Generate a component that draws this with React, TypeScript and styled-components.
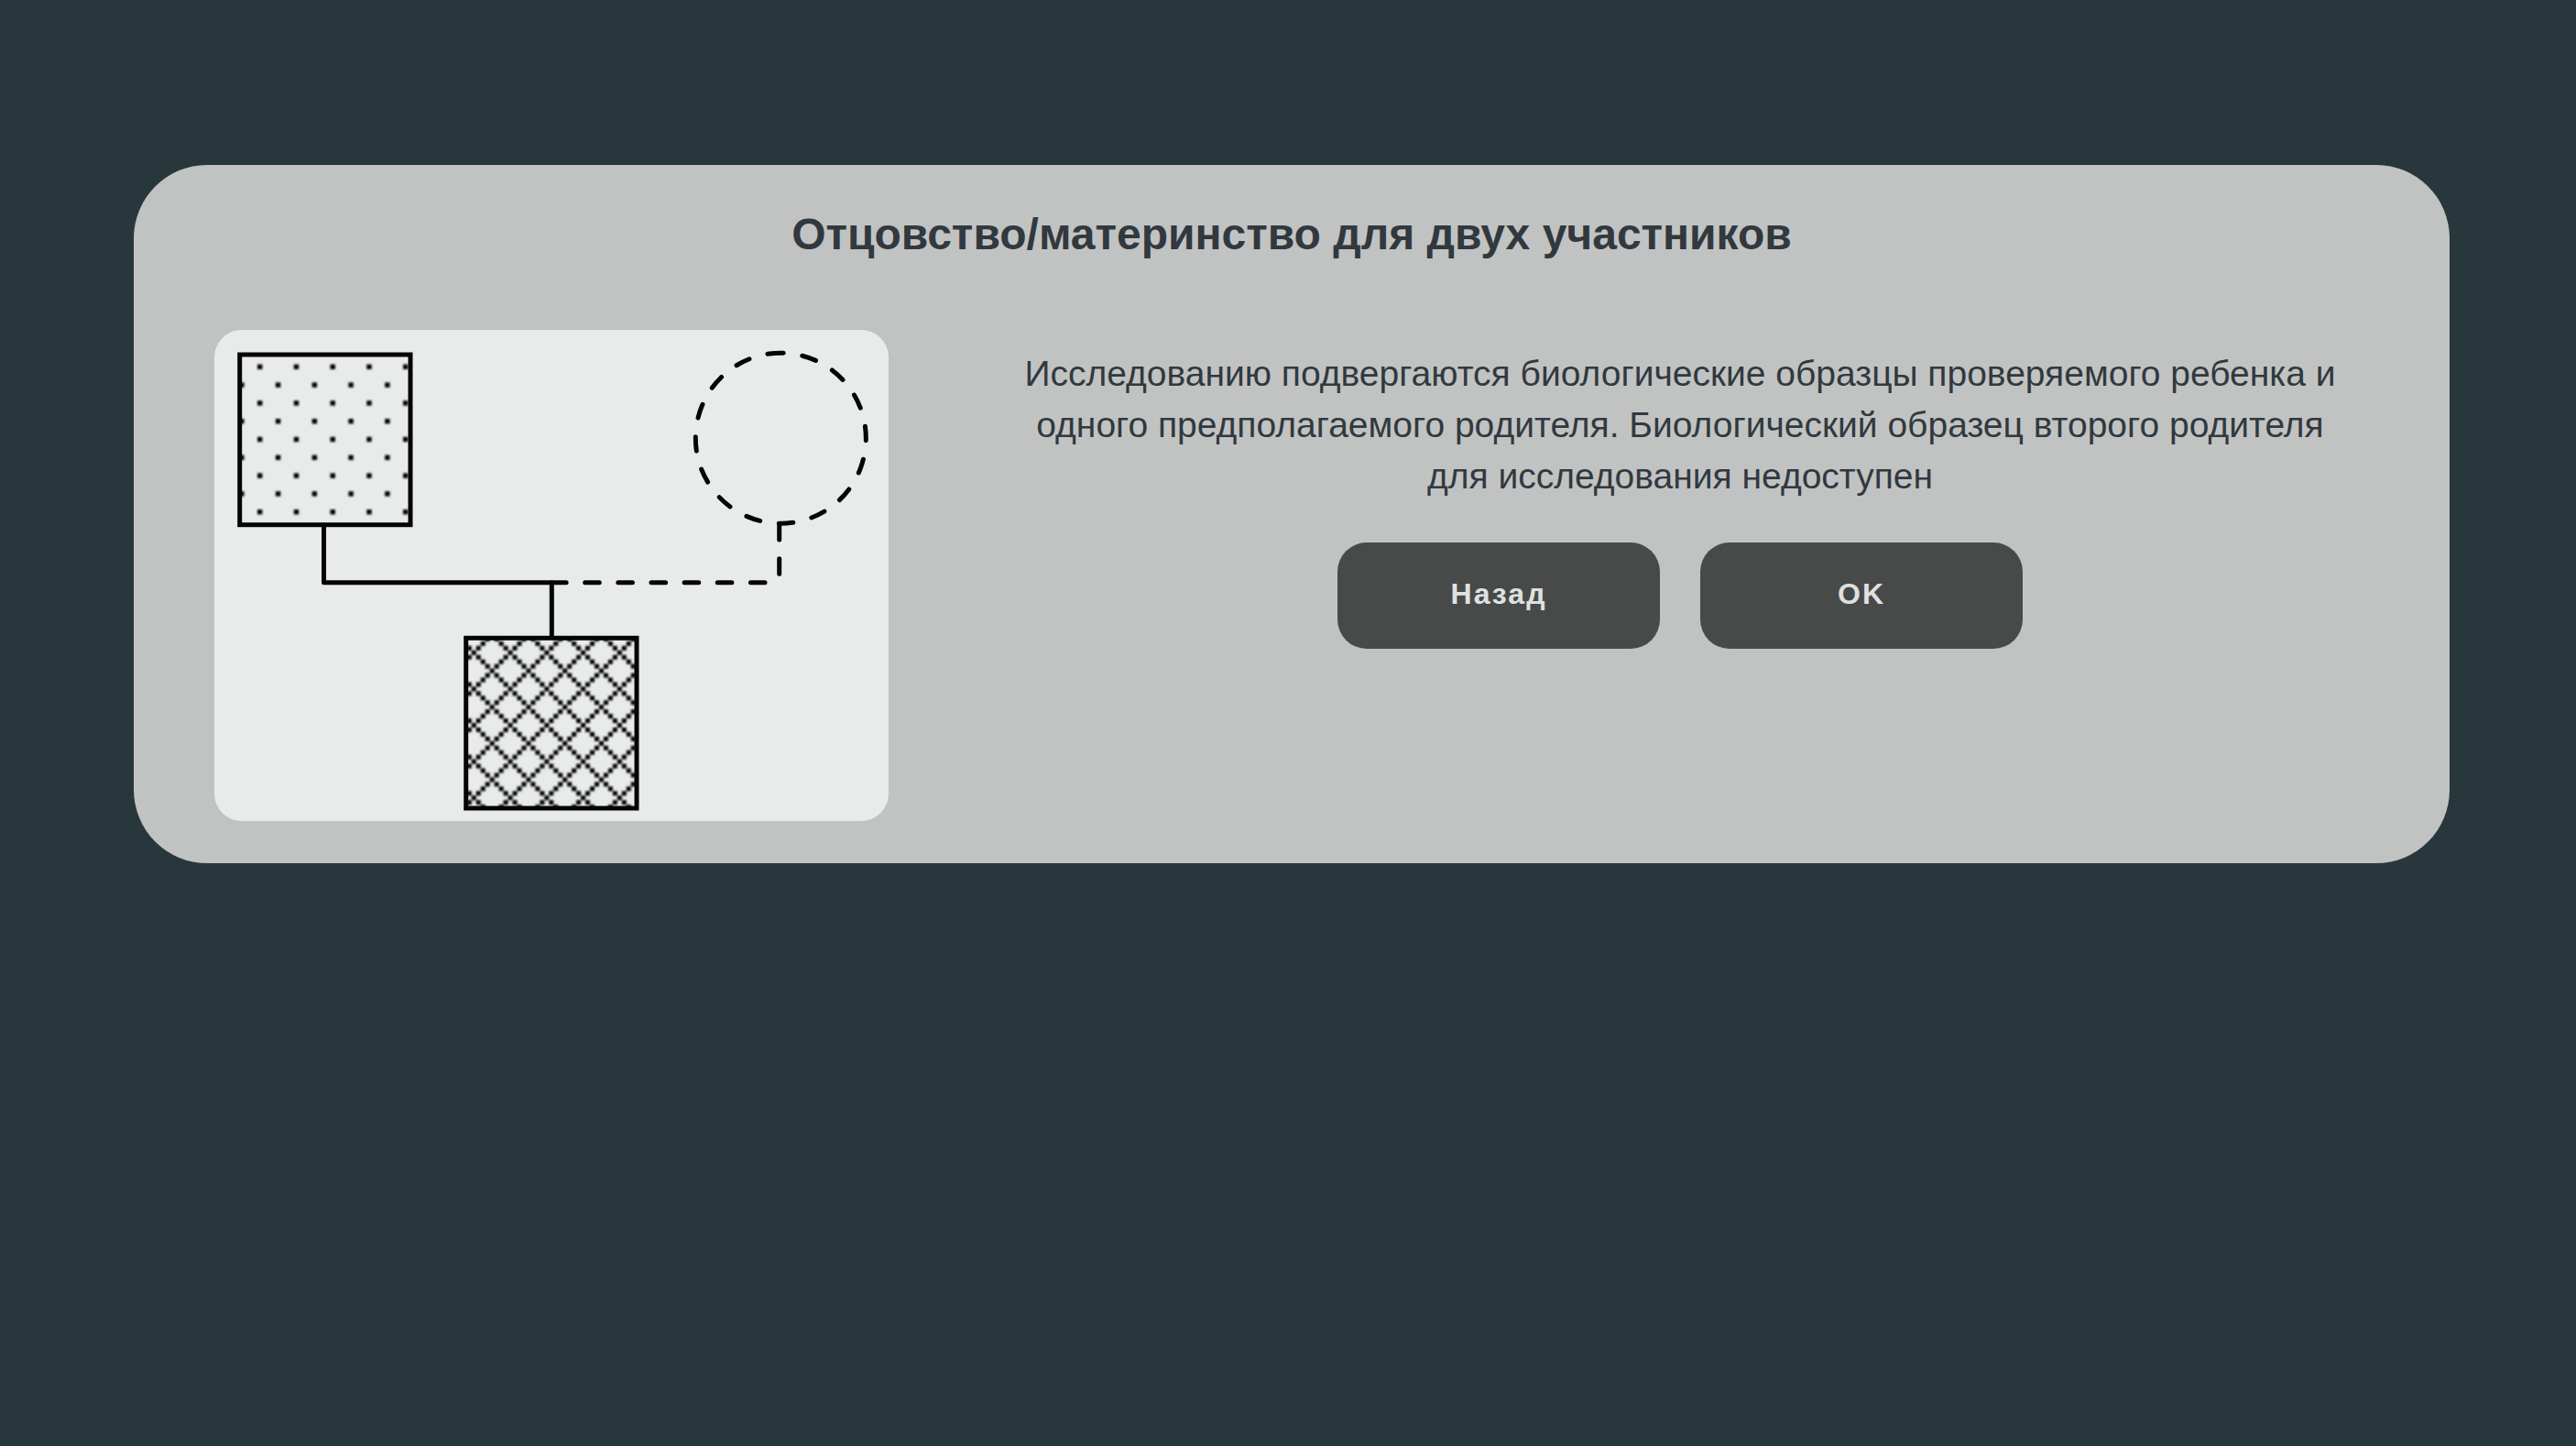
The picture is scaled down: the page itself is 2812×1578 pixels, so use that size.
import React from 'react';
import styled, { createGlobalStyle } from 'styled-components';

const GlobalStyle = createGlobalStyle`
  *, *::before, *::after { box-sizing: border-box; }
  body {
    margin: 0;
    background: #27373c;
    color: #31393f;
    font-family: "Liberation Sans", Arial, sans-serif;
  }
`;

const Page = styled.main`
  padding: 180px 138px 180px 146px;
`;

const Card = styled.section`
  padding: 46px 88px;
  border-radius: 80px;
  background: #c1c3c2;
`;

const Title = styled.h1`
  margin: 0 0 74px;
  font-size: 48px;
  line-height: 60px;
  text-align: center;
`;

const Columns = styled.div`
  display: grid;
  grid-template-columns: 736px 1fr;
  gap: 112px;
  align-items: start;
`;

const Diagram = styled.svg`
  display: block;
  width: 100%;
  height: auto;
  border-radius: 30px;
  background: #e8ebea;
`;

const Details = styled.div`
  padding: 20px 32px 0;
  text-align: center;
`;

const Description = styled.p`
  margin: 0 0 44px;
  font-size: 39px;
  line-height: 56px;
`;

const Actions = styled.div`
  display: flex;
  justify-content: center;
  gap: 44px;
`;

const Button = styled.button`
  width: 352px;
  height: 116px;
  padding: 0 0 4px;
  border: 0;
  border-radius: 32px;
  background: #484a49;
  color: #dfe1e0;
  font: bold 32px "Liberation Sans", Arial, sans-serif;
  letter-spacing: 2px;
`;

type Point = { x: number; y: number };

const STEP_X = 4.97;
const STEP_Y = 4.95;
const CELLS = 8;

// Sparse dots: two per repeat, the second half a repeat down and to the left.
const parentDots: Point[] = [];
for (let row = 0; row < 9; row += 1) {
  for (let col = 0; col < 5; col += 1) {
    parentDots.push({
      x: 49.7 + (col * CELLS - (row % 2) * 4) * STEP_X,
      y: 40.3 + row * 4 * STEP_Y,
    });
  }
}

// Crossing diagonals built of single cells.
const childCells: Point[] = [];
for (let row = -3; row <= 34; row += 1) {
  for (let col = -1; col <= 36; col += 1) {
    if ((row - col) % CELLS === 0 || (row + col) % CELLS === 0) {
      childCells.push({ x: 283.3 + col * STEP_X, y: 352.3 + row * STEP_Y });
    }
  }
}

function Dots({ points, size }: { points: Point[]; size: number }) {
  return (
    <>
      {points.map((p) => (
        <rect
          key={`${p.x}-${p.y}`}
          x={p.x - size / 2}
          y={p.y - size / 2}
          width={size}
          height={size}
        />
      ))}
    </>
  );
}

function FamilyDiagram() {
  return (
    <Diagram viewBox="0 0 736 536" role="img" aria-label="Схема родства">
      <defs>
        <filter id="soften">
          <feGaussianBlur stdDeviation="0.9" />
        </filter>
        <clipPath id="parent">
          <rect x="27.7" y="27" width="186.3" height="185.7" />
        </clipPath>
        <clipPath id="child">
          <rect x="274.7" y="336.3" width="186.3" height="185.7" />
        </clipPath>
      </defs>
      <g clipPath="url(#parent)" fill="#040605">
        <g filter="url(#soften)">
          <Dots points={parentDots} size={5.4} />
        </g>
      </g>
      <g clipPath="url(#child)" fill="#040605">
        <g filter="url(#soften)">
          <Dots points={childCells} size={5} />
        </g>
      </g>
      <g fill="none" stroke="#040605" strokeWidth="5">
        <rect x="27.7" y="27" width="186.3" height="185.7" />
        <rect x="274.7" y="336.3" width="186.3" height="185.7" />
        <path d="M119.5 213V275.7H368.3V338" strokeLinejoin="round" />
        <g strokeLinecap="round">
          <path d="M368.5 275.7H616.7" strokeDasharray="15.6 20.55" />
          <path d="M616.7 212.5V275" strokeDasharray="16.6 20.55" />
          <circle
            cx="618.3"
            cy="118.2"
            r="93"
            strokeDasharray="15.6 20.75"
            transform="rotate(-97.8 618.3 118.2)"
          />
        </g>
      </g>
    </Diagram>
  );
}

export default function App() {
  return (
    <>
      <GlobalStyle />
      <Page>
        <Card>
          <Title>Отцовство/материнство для двух участников</Title>
          <Columns>
            <FamilyDiagram />
            <Details>
              <Description>
                Исследованию подвергаются биологические образцы проверяемого ребенка и одного
                предполагаемого родителя. Биологический образец второго родителя для исследования
                недоступен
              </Description>
              <Actions>
                <Button type="button">Назад</Button>
                <Button type="button">OK</Button>
              </Actions>
            </Details>
          </Columns>
        </Card>
      </Page>
    </>
  );
}
